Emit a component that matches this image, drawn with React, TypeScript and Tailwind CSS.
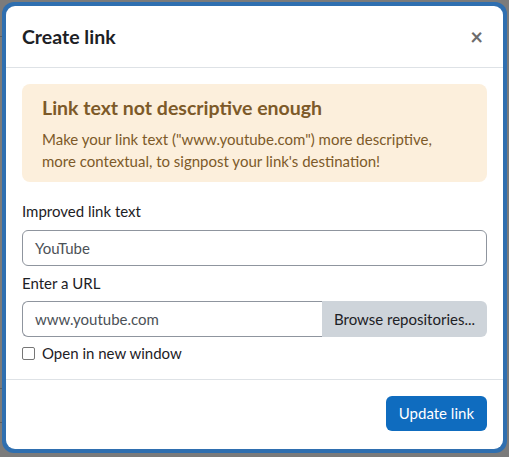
import React from "react";

export default function App() {
  const font = { fontFamily: "Lato, 'Noto Sans', sans-serif" };
  return (
    <div className="relative w-[509px] h-[457px] bg-[#7b7b7b] overflow-hidden" style={font}>
      <div className="absolute left-0 top-[36px] w-[4px] h-px bg-[#5e5e5e]" />
      <div className="absolute left-0 top-[388px] w-[4px] h-px bg-[#5e5e5e]" />
      <div className="absolute left-0 top-[422px] w-[4px] h-px bg-[#5e5e5e]" />
      <div className="absolute left-[2px] top-[2px] w-[505px] h-[451px] rounded-[12px] bg-[#2f6fb0] p-[4px]">
        <div className="flex flex-col h-full w-full rounded-[9px] bg-white">
          <div className="flex items-center justify-between h-[62px] px-[16px] border-b border-[#dee2e6]">
            <div className="text-[19.5px] font-bold text-[#1d2125]">Create link</div>
            <div className="text-[22px] font-bold text-[#6c6c6c] leading-none mr-[4px]">×</div>
          </div>
          <div className="flex flex-col px-[16px] pt-[16px]">
            <div className="rounded-[8px] bg-[#fcefdc] px-[20px] pt-[10px] pb-[10px] text-[#7d5a29]">
              <div className="text-[19.5px] font-bold leading-[28px]">Link text not descriptive enough</div>
              <div className="text-[15px] leading-[22px] mt-[6px]">
                Make your link text ("www.youtube.com") more descriptive, more contextual, to signpost your link's destination!
              </div>
            </div>
            <div className="mt-[18px] text-[15px] leading-[22px] text-[#1d2125]">Improved link text</div>
            <div className="mt-[8px] h-[36px] rounded-[6px] border border-[#8f959e] flex items-center px-[12px] text-[15px] text-[#4b5157]">
              YouTube
            </div>
            <div className="mt-[6px] text-[15px] leading-[22px] text-[#1d2125]">Enter a URL</div>
            <div className="mt-[7px] h-[36px] flex">
              <div className="flex-1 rounded-l-[6px] border border-r-0 border-[#8f959e] flex items-center px-[12px] text-[15px] text-[#4b5157]">
                www.youtube.com
              </div>
              <div className="w-[165px] rounded-r-[6px] bg-[#ced4da] flex items-center justify-center text-[15px] text-[#1d2125]">
                Browse repositories...
              </div>
            </div>
            <div className="mt-[5px] flex items-center gap-[7px] h-[22px]">
              <div className="w-[13px] h-[13px] rounded-[2px] border border-[#767676] bg-white" />
              <span className="text-[15px] text-[#1d2125]">Open in new window</span>
            </div>
          </div>
          <div className="mt-[15px] border-t border-[#dee2e6] flex justify-end px-[16px] pt-[16px]">
            <div className="h-[35px] px-[13px] rounded-[6px] bg-[#0f6cbf] text-white text-[15px] flex items-center">
              Update link
            </div>
          </div>
        </div>
      </div>
    </div>
  );
}
